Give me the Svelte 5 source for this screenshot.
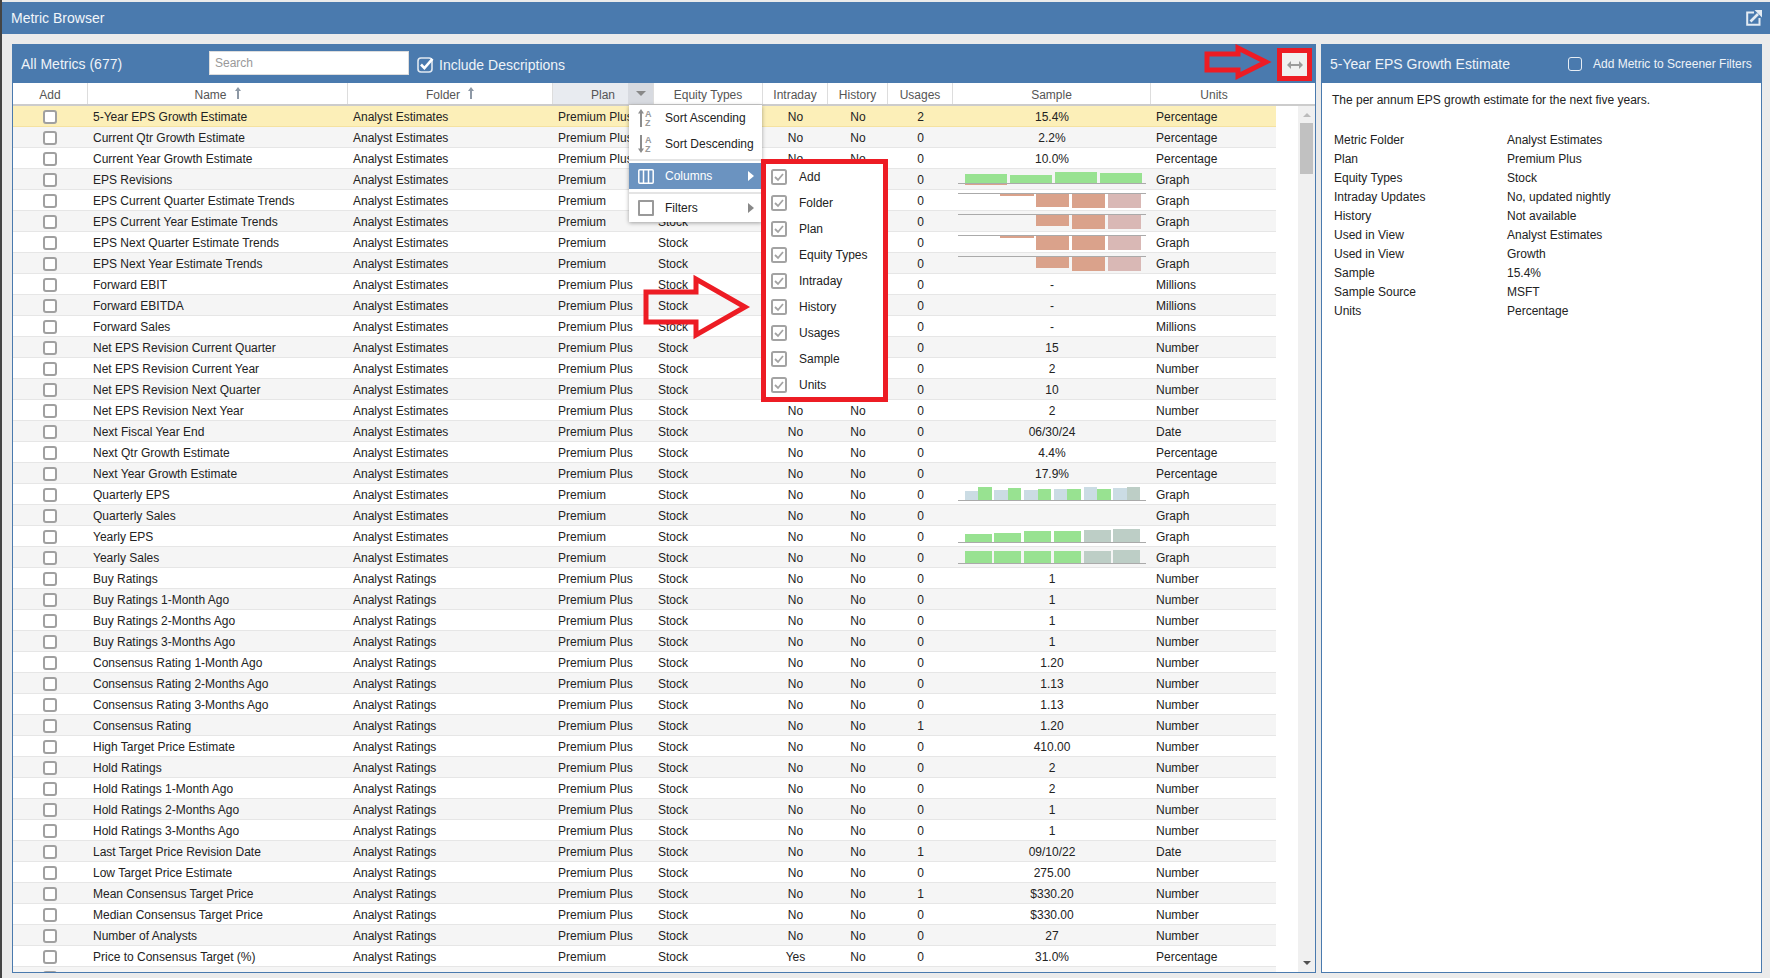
<script>
  const AE = "Analyst Estimates";
  const AR = "Analyst Ratings";
  const PP = "Premium Plus";
  const P = "Premium";

  // name, folder, plan, intraday, usages, sample, units, spark
  const rows = [
    ["5-Year EPS Growth Estimate", AE, PP, "No", 2, "15.4%", "Percentage"],
    ["Current Qtr Growth Estimate", AE, PP, "No", 0, "2.2%", "Percentage"],
    ["Current Year Growth Estimate", AE, PP, "No", 0, "10.0%", "Percentage"],
    ["EPS Revisions", AE, P, "No", 0, "", "Graph", "revisions"],
    ["EPS Current Quarter Estimate Trends", AE, P, "No", 0, "", "Graph", "trendA"],
    ["EPS Current Year Estimate Trends", AE, P, "No", 0, "", "Graph", "trendB"],
    ["EPS Next Quarter Estimate Trends", AE, P, "No", 0, "", "Graph", "trendC"],
    ["EPS Next Year Estimate Trends", AE, P, "No", 0, "", "Graph", "trendB"],
    ["Forward EBIT", AE, PP, "No", 0, "-", "Millions"],
    ["Forward EBITDA", AE, PP, "No", 0, "-", "Millions"],
    ["Forward Sales", AE, PP, "No", 0, "-", "Millions"],
    ["Net EPS Revision Current Quarter", AE, PP, "No", 0, "15", "Number"],
    ["Net EPS Revision Current Year", AE, PP, "No", 0, "2", "Number"],
    ["Net EPS Revision Next Quarter", AE, PP, "No", 0, "10", "Number"],
    ["Net EPS Revision Next Year", AE, PP, "No", 0, "2", "Number"],
    ["Next Fiscal Year End", AE, PP, "No", 0, "06/30/24", "Date"],
    ["Next Qtr Growth Estimate", AE, PP, "No", 0, "4.4%", "Percentage"],
    ["Next Year Growth Estimate", AE, PP, "No", 0, "17.9%", "Percentage"],
    ["Quarterly EPS", AE, P, "No", 0, "", "Graph", "quarterly"],
    ["Quarterly Sales", AE, P, "No", 0, "", "Graph"],
    ["Yearly EPS", AE, P, "No", 0, "", "Graph", "yearlyEps"],
    ["Yearly Sales", AE, P, "No", 0, "", "Graph", "yearlySales"],
    ["Buy Ratings", AR, PP, "No", 0, "1", "Number"],
    ["Buy Ratings 1-Month Ago", AR, PP, "No", 0, "1", "Number"],
    ["Buy Ratings 2-Months Ago", AR, PP, "No", 0, "1", "Number"],
    ["Buy Ratings 3-Months Ago", AR, PP, "No", 0, "1", "Number"],
    ["Consensus Rating 1-Month Ago", AR, PP, "No", 0, "1.20", "Number"],
    ["Consensus Rating 2-Months Ago", AR, PP, "No", 0, "1.13", "Number"],
    ["Consensus Rating 3-Months Ago", AR, PP, "No", 0, "1.13", "Number"],
    ["Consensus Rating", AR, PP, "No", 1, "1.20", "Number"],
    ["High Target Price Estimate", AR, PP, "No", 0, "410.00", "Number"],
    ["Hold Ratings", AR, PP, "No", 0, "2", "Number"],
    ["Hold Ratings 1-Month Ago", AR, PP, "No", 0, "2", "Number"],
    ["Hold Ratings 2-Months Ago", AR, PP, "No", 0, "1", "Number"],
    ["Hold Ratings 3-Months Ago", AR, PP, "No", 0, "1", "Number"],
    ["Last Target Price Revision Date", AR, PP, "No", 1, "09/10/22", "Date"],
    ["Low Target Price Estimate", AR, PP, "No", 0, "275.00", "Number"],
    ["Mean Consensus Target Price", AR, PP, "No", 1, "$330.20", "Number"],
    ["Median Consensus Target Price", AR, PP, "No", 0, "$330.00", "Number"],
    ["Number of Analysts", AR, PP, "No", 0, "27", "Number"],
    ["Price to Consensus Target (%)", AR, P, "Yes", 0, "31.0%", "Percentage"],
  ];

  const GREEN = "#98e291";
  const SALMON = "#daa28b";
  const PINK = "#d9b8b5";
  const LIGHT = "#cbdce4";
  const GREY = "#bdcec6";

  // x, width, top, bottom, colour; all relative to the row
  const trend = (second, third, last) => [
    ...(second ? [[48, 34, 4, second, SALMON]] : []),
    [84, 33, 4, third, SALMON],
    [120, 33, 4, last, SALMON],
    [156, 33, 4, last, PINK],
  ];
  const six = (tops, greens) =>
    tops.map((top, i) => [[13, 42, 72, 102, 132, 161][i], 27, top, 16, i < greens ? GREEN : GREY]);

  const sparks = {
    revisions: {
      base: 14.5,
      bars: [
        [13, 42, 14, 16, SALMON],
        [13, 42, 5, 14, GREEN],
        [58, 42, 6, 14, GREEN],
        [103, 42, 3, 14, GREEN],
        [148, 42, 4, 14, GREEN],
      ],
    },
    trendA: { base: 3.5, bars: trend(6, 17, 18) },
    trendB: { base: 3.5, bars: trend(0, 15, 18) },
    trendC: { base: 3.5, bars: trend(6, 18, 18) },
    quarterly: {
      base: 16.5,
      bars: [
        [13, 13, 7, 16, LIGHT], [26, 14, 3, 16, GREEN],
        [42, 14, 6, 16, LIGHT], [56, 13, 4, 16, GREEN],
        [72, 14, 6, 16, LIGHT], [86, 13, 5, 16, GREEN],
        [102, 13, 5, 16, LIGHT], [115, 14, 5, 16, GREEN],
        [132, 13, 3, 16, LIGHT], [145, 14, 5, 16, GREEN],
        [161, 14, 4, 16, LIGHT], [175, 13, 3, 16, GREY],
      ],
    },
    yearlyEps: { base: 16.5, bars: six([8, 7, 5, 5, 4, 3], 4) },
    yearlySales: { base: 16.5, bars: six([4, 4, 4, 4, 4, 3], 4) },
  };

  const columnChecks = ["Add", "Folder", "Plan", "Equity Types", "Intraday", "History", "Usages", "Sample", "Units"];

  const details = [
    ["Metric Folder", AE],
    ["Plan", PP],
    ["Equity Types", "Stock"],
    ["Intraday Updates", "No, updated nightly"],
    ["History", "Not available"],
    ["Used in View", AE],
    ["Used in View", "Growth"],
    ["Sample", "15.4%"],
    ["Sample Source", "MSFT"],
    ["Units", "Percentage"],
  ];
</script>

<div class="page">
  <header class="titlebar">
    <span>Metric Browser</span>
    <svg class="popout" width="16" height="16" viewBox="0 0 16 16">
      <path d="M8 2.5H1.2v12.3h12.3V8" fill="none" stroke="#e3ebf3" stroke-width="2" />
      <path d="M4.5 11.5 12 4" fill="none" stroke="#e3ebf3" stroke-width="2.6" />
      <path d="M8.5 0H16v7.5z" fill="#e3ebf3" />
    </svg>
  </header>

  <main class="content">
    <section class="panel metrics">
      <div class="panel-head">
        <span class="count">All Metrics (677)</span>
        <input class="search" placeholder="Search" />
        <svg class="include-box" width="17" height="17" viewBox="0 0 17 17">
          <rect x="1" y="2" width="14" height="14" rx="3" fill="none" stroke="#dfe8f1" stroke-width="1.6" />
          <path d="M4 8.5l3.4 3.6L15.5 2.8" fill="none" stroke="#fff" stroke-width="2.6" />
        </svg>
        <span class="include">Include Descriptions</span>
      </div>

      <div class="cols thead">
        <div>Add</div>
        <div>Name
          <svg class="sort" width="6" height="12" viewBox="0 0 6 12"><path d="M3 0l3 4H4v8H2V4H0z" /></svg>
        </div>
        <div>Folder
          <svg class="sort" width="6" height="12" viewBox="0 0 6 12"><path d="M3 0l3 4H4v8H2V4H0z" /></svg>
        </div>
        <div class="plan-head">Plan<span class="drop"><i></i></span></div>
        <div>Equity Types</div>
        <div>Intraday</div>
        <div>History</div>
        <div>Usages</div>
        <div>Sample</div>
        <div class="units-head">Units</div>
      </div>

      <div class="tbody">
        <div class="rows">
          {#each rows as row, i}
            <div class="cols row" class:selected={i === 0} class:alt={i % 2 === 1}>
              <div class="c"><span class="box"></span></div>
              <div class="l name">{row[0]}</div>
              <div class="l">{row[1]}</div>
              <div class="l">{row[2]}</div>
              <div class="l equity">Stock</div>
              <div class="c nudge">{row[3]}</div>
              <div class="c nudge">No</div>
              <div class="c nudge">{row[4]}</div>
              <div class="c sample">
                {#if row[7]}
                  <svg width="198" height="20" viewBox="0 0 198 20">
                    {#each sparks[row[7]].bars as b}
                      <rect x={b[0]} y={b[2]} width={b[1]} height={b[3] - b[2]} fill={b[4]} />
                    {/each}
                    <line x1="6" x2="194" y1={sparks[row[7]].base} y2={sparks[row[7]].base} stroke="#aaa" />
                  </svg>
                {:else}
                  <span class="value">{row[5]}</span>
                {/if}
              </div>
              <div class="l">{row[6]}</div>
            </div>
          {/each}
          <div class="cols row alt">
            <div class="c"><span class="box"></span></div>
          </div>
        </div>
        <div class="scrollbar">
          <i class="up"></i>
          <b></b>
          <i class="down"></i>
        </div>
      </div>
    </section>

    <section class="panel info">
      <div class="panel-head">
        <span class="info-title">5-Year EPS Growth Estimate</span>
        <span class="add-box"></span>
        <span class="add-label">Add Metric to Screener Filters</span>
      </div>
      <p class="desc">The per annum EPS growth estimate for the next five years.</p>
      <div class="details">
        {#each details as d}
          <span>{d[0]}</span>
          <span>{d[1]}</span>
        {/each}
      </div>
    </section>
  </main>

  <!-- header dropdown lies over the table -->
  <div class="menu">
    <div class="item">
      <svg width="16" height="18" viewBox="0 0 16 18">
        <path d="M3 0l3 4.5H4V18H2V4.5H0z" fill="#8c8c8c" />
        <text x="7" y="8" class="az">A</text>
        <text x="7" y="17" class="az">Z</text>
      </svg>
      Sort Ascending
    </div>
    <div class="item">
      <svg width="16" height="18" viewBox="0 0 16 18">
        <path d="M3 18l3-4.5H4V0H2v13.5H0z" fill="#8c8c8c" />
        <text x="7" y="8" class="az">A</text>
        <text x="7" y="17" class="az">Z</text>
      </svg>
      Sort Descending
    </div>
    <hr />
    <div class="item active">
      <svg width="16" height="15" viewBox="0 0 16 15" fill="none" stroke="#fff" stroke-width="1.5">
        <rect x="0.8" y="0.8" width="14.4" height="13.4" rx="1" />
        <path d="M5.5 1v13M10.5 1v13" />
      </svg>
      Columns
      <i class="more white"></i>
    </div>
    <hr />
    <div class="item filters">
      <span class="filter-box"></span>
      Filters
      <i class="more"></i>
    </div>
  </div>

  <div class="submenu">
    {#each columnChecks as name}
      <div class="check-item">
        <svg width="16" height="16" viewBox="0 0 16 16">
          <rect x="1" y="1" width="14" height="14" rx="1.5" fill="#fff" stroke="#a3a3a3" stroke-width="2" />
          <path d="M4 8l3 3 5-6" fill="none" stroke="#a3a3a3" stroke-width="1.8" />
        </svg>
        {name}
      </div>
    {/each}
  </div>

  <!-- annotation arrows drawn on top of the screenshot -->
  <svg class="arrow one" width="112" height="70" viewBox="0 0 112 70">
    <path d="M3 18h50V5l49 28-49 28V48H3z" fill="none" stroke="#ed1c24" stroke-width="5" />
  </svg>
  <svg class="arrow two" width="72" height="42" viewBox="0 0 72 42">
    <path d="M3 10h31V4l28 14-28 14v-6H3z" fill="none" stroke="#ed1c24" stroke-width="5" />
  </svg>
  <div class="expand">
    <svg width="16" height="8" viewBox="0 0 16 8">
      <path d="M0 4l4-4v3h8V0l4 4-4 4V5H4v3z" fill="#9b9b9b" />
    </svg>
  </div>
</div>

<style>
  :global(body) {
    margin: 0;
    background: #ebebeb;
  }

  .page {
    position: relative;
    height: 978px;
    overflow: hidden;
    display: flex;
    flex-direction: column;
    border-left: 2px solid #444;
    box-sizing: border-box;
    font-family: "Liberation Sans", Arial, sans-serif;
    font-size: 12px;
    color: #222;
  }

  .titlebar {
    margin-top: 2px;
    height: 32px;
    flex: none;
    background: #4a7aae;
    color: #f2f6fa;
    font-size: 14px;
    display: flex;
    align-items: center;
    justify-content: space-between;
    padding: 0 8px 0 9px;
  }

  .content {
    flex: 1;
    min-height: 0;
    display: flex;
    gap: 5px;
    padding: 10px 8px 5px 10px;
  }

  .panel {
    background: #fff;
    border: 1px solid #4a7aae;
    border-top: none;
    display: flex;
    flex-direction: column;
    box-sizing: border-box;
    min-height: 0;
  }

  .metrics {
    width: 1304px;
  }

  .info {
    width: 441px;
  }

  .panel-head {
    height: 39px;
    flex: none;
    background: #4a7aae;
    color: #eef3f8;
    display: flex;
    align-items: center;
    margin: 0 -1px;
    font-size: 14px;
  }

  .count {
    margin-left: 9px;
    width: 188px;
  }

  .search {
    width: 200px;
    height: 24px;
    box-sizing: border-box;
    border: 1px solid #ddd;
    padding: 0 5px;
    margin-top: -1px;
    font: 12px "Liberation Sans", Arial, sans-serif;
    background: #fff;
  }

  .search::placeholder {
    color: #999;
  }

  .include-box {
    margin: 2px 5px 0 8px;
  }

  .include {
    padding-top: 2px;
  }

  .cols {
    display: grid;
    grid-template-columns: 74px 260px 205px 101px 109px 65px 60px 65px 198px 126px;
  }

  .thead {
    grid-template-columns: 75px 260px 205px 101px 109px 65px 60px 65px 198px 126px;
    height: 21px;
    flex: none;
    border-bottom: 2px solid #ccc;
    color: #555;
  }

  .thead > div {
    display: flex;
    align-items: center;
    justify-content: center;
    gap: 8px;
    border-right: 1px solid #ddd;
    box-sizing: border-box;
    position: relative;
    padding-top: 2px;
  }

  .thead .units-head {
    border-right: none;
  }

  .sort {
    fill: #8d98a5;
    margin-top: -3px;
  }

  .thead .plan-head {
    background: #e8ebf0;
  }

  .drop {
    position: absolute;
    right: 0;
    top: 0;
    bottom: 0;
    width: 25px;
    background: #d7dae0;
    display: flex;
    align-items: center;
    justify-content: center;
  }

  .drop i {
    border: 5px solid transparent;
    border-top: 5px solid #888;
    border-bottom: none;
  }

  .tbody {
    flex: 1;
    min-height: 0;
    display: flex;
    overflow: hidden;
  }

  .rows {
    flex: 1;
    min-width: 0;
    overflow: hidden;
    margin-right: 22px;
  }

  .row {
    height: 21px;
    box-sizing: border-box;
    border-bottom: 1px solid #e6e6e6;
    background: #fff;
    line-height: 22px;
    white-space: nowrap;
  }

  .row.alt {
    background: #f5f5f5;
  }

  .row.selected {
    background: #fcefb8;
    border-bottom-color: #f5e2a0;
  }

  .l {
    padding-left: 6px;
    overflow: hidden;
  }

  .equity {
    padding-left: 5px;
  }

  .c {
    text-align: center;
  }

  .nudge {
    padding-left: 2px;
  }

  .value {
    padding-left: 2px;
  }

  .sample svg {
    display: block;
  }

  .box {
    display: block;
    width: 14px;
    height: 14px;
    box-sizing: border-box;
    border: 2px solid #a0a0a0;
    border-radius: 3px;
    background: #fff;
    margin: 4px 0 0 30px;
  }

  .scrollbar {
    width: 17px;
    flex: none;
    background: #f0f0f0;
    display: flex;
    flex-direction: column;
    align-items: center;
    padding: 7px 0 7px;
    box-sizing: border-box;
  }

  .scrollbar b {
    display: block;
    width: 13px;
    height: 51px;
    margin: 6px 0 auto;
    background: #c1c1c1;
  }

  .up {
    border: 4px solid transparent;
    border-bottom: 4px solid #bbb;
    border-top: none;
  }

  .down {
    border: 4px solid transparent;
    border-top: 4px solid #505050;
    border-bottom: none;
  }

  .info-title {
    margin-left: 9px;
    width: 238px;
  }

  .add-box {
    width: 14px;
    height: 14px;
    box-sizing: border-box;
    border: 1.5px solid #e6edf4;
    border-radius: 3px;
  }

  .add-label {
    margin-left: 11px;
    font-size: 12px;
  }

  .desc {
    margin: 10px 0 0 10px;
    line-height: 14px;
  }

  .details {
    margin: 24px 0 0 12px;
    display: grid;
    grid-template-columns: 173px 1fr;
    grid-auto-rows: 19px;
    line-height: 19px;
  }

  .menu {
    position: absolute;
    left: 627px;
    top: 105px;
    width: 133px;
    height: 117px;
    box-sizing: border-box;
    background: #fff;
    box-shadow: 0 1px 4px rgba(0, 0, 0, 0.35);
  }

  .item {
    height: 26px;
    display: flex;
    align-items: center;
    position: relative;
    padding-left: 9px;
    gap: 11px;
    box-sizing: border-box;
  }

  .item svg {
    flex: none;
  }

  .az {
    font: bold 9px "Liberation Sans", Arial, sans-serif;
    fill: #999;
  }

  .item.active {
    background: #6b93c0;
    color: #fff;
  }

  .item.filters {
    margin-top: -1px;
  }

  .menu hr {
    border: none;
    border-top: 2px solid #e4e4e4;
    margin: 3px 0 2px;
  }

  .menu hr:first-of-type {
    margin: 2px 0 2px;
  }

  .filter-box {
    width: 16px;
    height: 16px;
    box-sizing: border-box;
    border: 2px solid #999;
    border-radius: 1px;
  }

  .more {
    position: absolute;
    right: 8px;
    top: 8px;
    border: 5px solid transparent;
    border-left: 6px solid #888;
    border-right: none;
  }

  .more.white {
    border-left-color: #fff;
  }

  .submenu {
    position: absolute;
    left: 759px;
    top: 159px;
    width: 127px;
    height: 243px;
    box-sizing: border-box;
    background: #fff;
    border: 5px solid #ed1c24;
    padding-left: 5px;
  }

  .check-item {
    height: 26px;
    display: flex;
    align-items: center;
    gap: 12px;
  }

  .arrow {
    position: absolute;
    pointer-events: none;
  }

  .one {
    left: 641px;
    top: 274px;
  }

  .two {
    left: 1202px;
    top: 44px;
  }

  .expand {
    position: absolute;
    left: 1275px;
    top: 48px;
    width: 35px;
    height: 33px;
    box-sizing: border-box;
    border: 5px solid #ed1c24;
    background: #f0f0f0;
    display: flex;
    align-items: center;
    justify-content: center;
  }
</style>
